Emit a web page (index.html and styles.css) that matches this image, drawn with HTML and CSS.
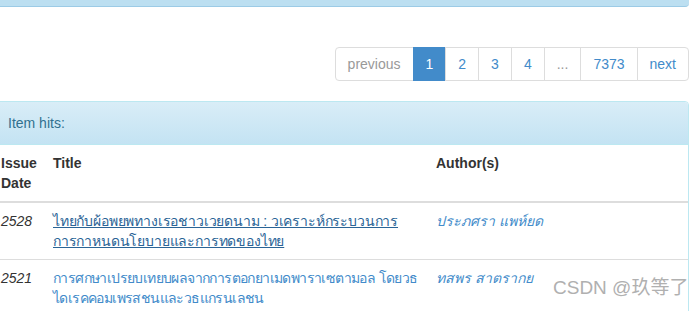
FILE: index.html
```html
<!DOCTYPE html>
<html lang="th">
<head>
<meta charset="UTF-8">
<title>Item hits</title>
<link rel="stylesheet" href="styles.css">
</head>
<body>

<div class="page">
  <div class="top-panel"></div>

  <div class="pager-row">
    <ul class="pagination">
      <li class="disabled"><span>previous</span></li>
      <li class="active"><span>1</span></li>
      <li><a href="#">2</a></li>
      <li><a href="#">3</a></li>
      <li><a href="#">4</a></li>
      <li class="disabled"><span>...</span></li>
      <li><a href="#">7373</a></li>
      <li><a href="#">next</a></li>
    </ul>
  </div>

  <div class="panel">
    <div class="panel-heading">Item hits:</div>
    <table class="table">
      <tr>
        <th class="col-date">Issue Date</th>
        <th class="col-title">Title</th>
        <th>Author(s)</th>
      </tr>
      <tr>
        <td><em>2528</em></td>
        <td><a class="title visited" href="#">ไทยกับผ้อพยพทางเรอชาวเวยดนาม : วเคราะห์กระบวนการการกาหนดนโยบายและการทดของไทย</a></td>
        <td><em><a href="#">ประภศรา แพห์ยด</a></em></td>
      </tr>
      <tr>
        <td><em>2521</em></td>
        <td><a class="title tight" href="#">การศกษาเปรยบเทยบผลจากการตอกยาเมดพาราเซตามอล <span class="keep">โดยวธ</span> ไดเรคคอมเพรสชนและวธแกรนเลชน</a></td>
        <td><em><a href="#">ทสพร สาตรากย</a></em></td>
      </tr>
    </table>
  </div>
</div>

<div class="watermark">CSDN @玖等了</div>

</body>
</html>
```

FILE: styles.css
```css
body {
  margin: 0;
  background-color: #fff;
  color: #333;
  font-family: "Liberation Sans", Arial, sans-serif;
  font-size: 14px;
  line-height: 20px;
  overflow: hidden;
}
.page {
  margin-left: -8px;
  width: 697px;
}
.top-panel {
  height: 6px;
  background-color: #bcdff1;
  border-bottom: 1px solid #9ccbe6;
  border-radius: 0 0 4px 4px;
}
.pager-row {
  display: flex;
  justify-content: flex-end;
  padding: 40px 0 20px;
}
.pagination {
  display: flex;
  list-style: none;
  margin: 0;
  padding: 0;
}
.pagination li a,
.pagination li span {
  display: block;
  padding: 6px 12px;
  line-height: 20px;
  border: 1px solid #ddd;
  margin-left: -1px;
  color: #428bca;
  text-decoration: none;
  background-color: #fff;
}
.pagination li:first-child span {
  margin-left: 0;
  border-radius: 4px 0 0 4px;
}
.pagination li:last-child a {
  border-radius: 0 4px 4px 0;
}
.pagination .disabled span {
  color: #999;
}
.pagination .active span {
  background-color: #428bca;
  border-color: #428bca;
  color: #fff;
}
.panel {
  border: 1px solid #bce8f1;
  border-radius: 4px;
}
.panel-heading {
  padding: 10px 15px;
  height: 22px;
  line-height: 22px;
  color: #31708f;
  background-image: linear-gradient(to bottom, #d9edf7 0, #c4e3f3 100%);
  border-bottom: 1px solid #bce8f1;
  border-radius: 3px 3px 0 0;
}
.table {
  width: 100%;
  border-collapse: collapse;
}
.table th,
.table td {
  padding: 8px;
  text-align: left;
  vertical-align: top;
  border-top: 1px solid #ddd;
}
.table tr:first-child th {
  border-top: 0;
  border-bottom: 2px solid #ddd;
}
.col-date {
  width: 36px;
}
.col-title {
  width: 367px;
}
.table a {
  color: #428bca;
  text-decoration: none;
}
.table a.title {
  letter-spacing: -0.17px;
}
.table a.tight {
  letter-spacing: -0.6px;
}
.keep {
  white-space: nowrap;
}
.table a.visited {
  color: #2a6496;
  text-decoration: underline;
}
.watermark {
  position: absolute;
  left: 553px;
  top: 278px;
  font-size: 19px;
  color: #b0b0b0;
  font-family: "Liberation Sans", "Noto Sans CJK SC", sans-serif;
}
```
